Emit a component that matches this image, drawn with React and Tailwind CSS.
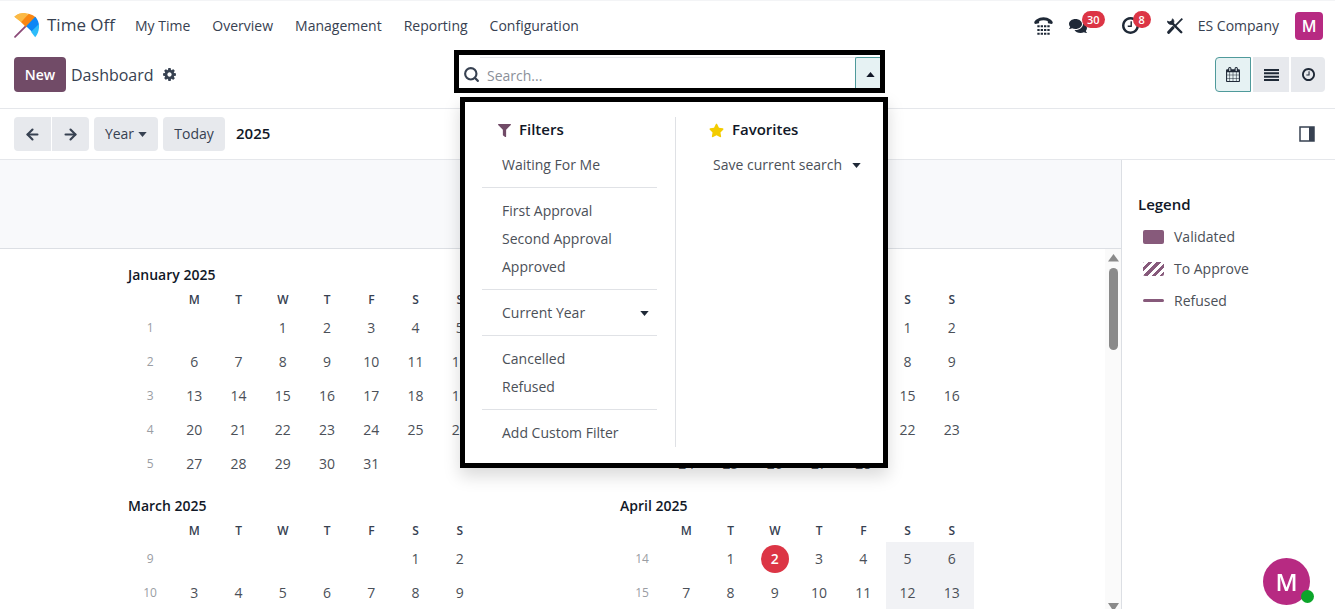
import { useState } from "react";
import { FaComments, FaFilter, FaStar } from "react-icons/fa";
import { ArrowLeft, ArrowRight, Search } from "lucide-react";

const menus = ["My Time", "Overview", "Management", "Reporting", "Configuration"];
const weekDays = ["M", "T", "W", "T", "F", "S", "S"];
const monthNames = [
  "January", "February", "March", "April", "May", "June",
  "July", "August", "September", "October", "November", "December",
];

const YEAR = 2025;
const TODAY = new Date(YEAR, 3, 2);

// ISO week number of the given monday
function weekNumber(monday) {
  const thursday = new Date(monday.getFullYear(), monday.getMonth(), monday.getDate() + 3);
  const start = new Date(thursday.getFullYear(), 0, 1);
  return Math.floor(Math.round((thursday - start) / 86400000) / 7) + 1;
}

function getWeeks(month) {
  const offset = (new Date(YEAR, month, 1).getDay() + 6) % 7;
  const total = new Date(YEAR, month + 1, 0).getDate();
  const weeks = [];
  for (let first = 1 - offset; first <= total; first += 7) {
    const days = weekDays.map((_, i) => {
      const day = first + i;
      return day >= 1 && day <= total ? day : null;
    });
    weeks.push({ number: weekNumber(new Date(YEAR, month, first)), days });
  }
  return weeks;
}

function Caret({ up = false }) {
  return (
    <svg viewBox="0 0 10 6" className="w-[9px] h-[5px] shrink-0" fill="currentColor" aria-hidden="true">
      <path d={up ? "M0 6 5 0l5 6z" : "M0 0h10L5 6z"} />
    </svg>
  );
}

function Logo() {
  return (
    <svg viewBox="0 0 72 72" className="w-[25px] h-[25px]" aria-hidden="true">
      <path d="M34 38 3 69" stroke="#8b4a78" strokeWidth="5" strokeLinecap="round" />
      <path d="M1 11C9 3 20 0 31 0L52 19 35 37Z" fill="#fbb945" />
      <path d="M20 26 42 2C51 4 58 8 64 14L35 41Z" fill="#f98612" />
      <path d="M1 11C9 3 20 0 31 0L42 2 20 26Z" fill="#fbb945" />
      <path d="M35 38 61 11C68 18 72 28 72 38L54 56Z" fill="#0d86f5" />
      <path d="M49 54 72 32C73 46 70 60 61 70Z" fill="#2ebcfa" />
    </svg>
  );
}

function CogIcon() {
  return (
    <svg viewBox="0 0 1792 1792" className="w-[15px] h-[15px]" fill="currentColor" aria-hidden="true">
      <path d="M1152 896q0-106-75-181t-181-75-181 75-75 181 75 181 181 75 181-75 75-181zm512-109v222q0 12-8 23t-20 13l-185 28q-19 54-39 91 35 50 107 138 10 12 10 25t-9 23q-27 37-99 108t-94 71q-12 0-26-9l-138-108q-44 23-91 38-16 136-29 186-7 28-36 28h-222q-14 0-24.5-8.5t-11.5-21.5l-28-184q-49-16-90-37l-141 107q-10 9-25 9-14 0-25-11-126-114-165-168-7-10-7-23 0-12 8-23 15-21 51-66.5t54-70.5q-27-50-41-99l-183-27q-13-2-21-12.500t-8-23.500v-222q0-12 8-23t19-13l186-28q14-46 39-92-40-57-107-138-10-12-10-24 0-10 9-23 26-36 98.500-107.500t94.500-71.500q13 0 26 10l138 107q44-23 91-38 16-136 29-186 7-28 36-28h222q14 0 24.500 8.500t11.500 21.500l28 184q49 16 90 37l142-107q9-9 24-9 13 0 25 10 129 119 165 170 7 8 7 22 0 12-8 23-15 21-51 66.500t-54 70.500q26 50 41 98l183 28q13 2 21 12.500t8 23.500z" />
    </svg>
  );
}

function CalendarIcon() {
  return (
    <svg viewBox="64 0 1664 1792" className="w-[14px] h-[15px]" fill="currentColor" aria-hidden="true">
      <path d="M192 1664h288v-288h-288v288zm352 0h320v-288h-320v288zm-352-352h288v-320h-288v320zm352 0h320v-320h-320v320zm-352-384h288v-288h-288v288zm736 736h320v-288h-320v288zm-384-736h320v-288h-320v288zm768 736h288v-288h-288v288zm-384-352h320v-320h-320v320zm-352-864v-288q0-13-9.500-22.500t-22.500-9.500h-64q-13 0-22.500 9.500t-9.500 22.500v288q0 13 9.500 22.500t22.500 9.500h64q13 0 22.500-9.500t9.500-22.500zm736 864h288v-320h-288v320zm-384-384h320v-288h-320v288zm384 0h288v-288h-288v288zm32-480v-288q0-13-9.500-22.500t-22.500-9.500h-64q-13 0-22.500 9.500t-9.500 22.500v288q0 13 9.500 22.500t22.500 9.500h64q13 0 22.500-9.500t9.500-22.500zm384-64v1280q0 52-38 90t-90 38h-1408q-52 0-90-38t-38-90v-1280q0-52 38-90t90-38h128v-96q0-66 47-113t113-47h64q66 0 113 47t47 113v96h384v-96q0-66 47-113t113-47h64q66 0 113 47t47 113v96h128q52 0 90 38t38 90z" />
    </svg>
  );
}

function ClockIcon({ className }) {
  return (
    <svg viewBox="128 128 1536 1536" className={className} fill="currentColor" aria-hidden="true">
      <path d="M1024 544v448q0 14-9 23t-23 9h-320q-14 0-23-9t-9-23v-64q0-14 9-23t23-9h224v-352q0-14 9-23t23-9h64q14 0 23 9t9 23zm416 352q0-148-73-273t-198-198-273-73-273 73-198 198-73 273 73 273 198 198 273 73 273-73 198-198 73-273zm224 0q0 209-103 385.500t-279.500 279.500-385.500 103-385.500-103-279.500-279.500-103-385.500 103-385.500 279.500-279.500 385.500-103 385.500 103 279.500 279.500 103 385.500z" />
    </svg>
  );
}

function PhoneIcon() {
  return (
    <svg viewBox="0 0 57 54" className="w-[19px] h-[18px]" fill="currentColor" aria-hidden="true">
      <path d="M1 19C-1 12 12 1 28.500 1S58 12 56 19l-3 2-11-2-1-7C33 9 24 9 16 12l-1 7-11 2z" />
      <path d="M10 28h37M10 39h37M10 50h37" stroke="currentColor" strokeWidth="6" strokeDasharray="7 3" />
    </svg>
  );
}

function ToolsIcon() {
  return (
    <svg viewBox="0 0 46 46" className="w-4 h-4" fill="none" stroke="currentColor" aria-hidden="true">
      <path d="M12 12 41 41" strokeWidth="7" strokeLinecap="round" />
      <path d="M1 9a11 11 0 0 0 15 9 10 10 0 0 0 0-16l-3 7-6 2z" fill="currentColor" strokeWidth="2" />
      <path d="M44 2 22 24" strokeWidth="5" />
      <path d="M17 28 5 41" strokeWidth="9" strokeLinecap="round" />
    </svg>
  );
}

function Navbar() {
  return (
    <header className="h-[50px] shrink-0 border-t border-gray-100 pl-3.5 pr-3 flex items-center justify-between">
      <div className="flex items-center">
        <a href="#" className="flex items-center gap-2 text-[17px] text-[#374151]">
          <Logo />
          Time Off
        </a>
        <nav className="ml-5 flex gap-[22px]">
          {menus.map((menu) => (
            <a key={menu} href="#">{menu}</a>
          ))}
        </nav>
      </div>

      <div className="flex items-center text-[#1f2937]">
        <button aria-label="Phone"><PhoneIcon /></button>
        <button aria-label="Messages" className="relative ml-4">
          <FaComments className="w-[18px] h-[18px]" />
          <span className="absolute -top-[6px] left-[13px] h-[17px] w-[23px] rounded-full bg-[#dc3545] text-white text-[11px] leading-[17px] font-semibold">30</span>
        </button>
        <button aria-label="Activities" className="relative ml-[35px]">
          <ClockIcon className="w-[17px] h-[17px]" />
          <span className="absolute -top-[6px] left-[11px] h-[17px] w-[18px] rounded-full bg-[#dc3545] text-white text-[11px] leading-[17px] font-semibold">8</span>
        </button>
        <button aria-label="Tools" className="ml-7"><ToolsIcon /></button>
        <button className="ml-[15px] text-[#374151]">ES Company</button>
        <button aria-label="Account" className="ml-4 h-7 w-7 rounded bg-[#b72a82] text-white text-base font-semibold">M</button>
      </div>
    </header>
  );
}

function MenuItem({ children, caret = false }) {
  return (
    <button className="w-full h-7 pl-5 pr-2 flex items-center justify-between text-left text-[#4b5058]">
      {children}
      {caret && <span className="text-[#1f2937]"><Caret /></span>}
    </button>
  );
}

function Divider() {
  return <hr className="mt-2 mb-[9px] border-[#e0e2e6]" />;
}

function SearchMenu() {
  return (
    <div className="absolute z-10 left-px top-[42px] w-[428px] border-5 border-black bg-white pt-[15px] pb-4 flex shadow-[0_8px_16px_rgba(0,0,0,0.15)]">
      <section className="w-[211px] pl-[17px] pr-[18px] border-r border-[#dfe1e5]">
        <h2 className="h-[26px] mb-2 pl-4 flex items-center gap-2 text-[15px] font-semibold text-[#111827]">
          <FaFilter className="w-[13px] h-[13px] text-[#714b67]" />
          Filters
        </h2>
        <MenuItem>Waiting For Me</MenuItem>
        <Divider />
        <MenuItem>First Approval</MenuItem>
        <MenuItem>Second Approval</MenuItem>
        <MenuItem>Approved</MenuItem>
        <Divider />
        <MenuItem caret>Current Year</MenuItem>
        <Divider />
        <MenuItem>Cancelled</MenuItem>
        <MenuItem>Refused</MenuItem>
        <Divider />
        <MenuItem>Add Custom Filter</MenuItem>
      </section>
      <section className="flex-1 pl-[17px] pr-[14px]">
        <h2 className="h-[26px] mb-2 pl-4 flex items-center gap-2 text-[15px] font-semibold text-[#111827]">
          <FaStar className="w-[15px] h-[15px] text-[#f3cc00]" />
          Favorites
        </h2>
        <MenuItem caret>Save current search</MenuItem>
      </section>
    </div>
  );
}

function ControlPanel() {
  const [open, setOpen] = useState(true);

  return (
    <div className="h-[59px] shrink-0 border-b border-gray-200 pl-3.5 pr-2.5 grid grid-cols-[1fr_431px_1fr] items-start">
      <div className="pt-[7px] flex items-center">
        <button className="h-[35px] w-[52px] rounded bg-[#714b67] text-white font-semibold">New</button>
        <span className="ml-[5px] text-base text-[#374151]">Dashboard</span>
        <button aria-label="Actions" className="ml-2 text-[#374151]"><CogIcon /></button>
      </div>

      <div className="relative h-[43px] border-5 border-black flex items-stretch">
        <label htmlFor="search" className="pt-[6px] pl-1 flex items-center">
          <Search size={17} strokeWidth={3} aria-label="Search" />
        </label>
        <input
          id="search"
          type="text"
          placeholder="Search..."
          className="flex-1 min-w-0 mt-[2px] pt-[5px] pl-[7px] border-t border-gray-200 outline-none placeholder:text-[#8b9099]"
        />
        <button
          aria-label="Toggle search panel"
          onClick={() => setOpen(!open)}
          className="w-[25px] mt-[2px] pt-[3px] pl-[5px] flex items-center justify-center border-l border-t border-[#4f9a9b] rounded-tl-xs bg-[#e6f2f3] text-[#111827]"
        >
          <Caret up />
        </button>
        {open && <SearchMenu />}
      </div>

      <div className="pt-[7px] flex justify-end gap-[2px] text-[#1f2937]">
        <button aria-label="Calendar" className="h-[35px] w-9 rounded-l border border-[#4f9a9b] bg-[#e6f2f3] flex items-center justify-center">
          <CalendarIcon />
        </button>
        <button aria-label="List" className="h-[35px] w-9 bg-[#e7e9ed] flex items-center justify-center">
          <svg viewBox="0 0 15 12" className="w-[15px] h-3" stroke="currentColor" strokeWidth="2" aria-hidden="true">
            <path d="M0 1h15M0 4.330h15M0 7.660h15M0 11h15" />
          </svg>
        </button>
        <button aria-label="Activity" className="h-[35px] w-[34px] rounded-r bg-[#e7e9ed] flex items-center justify-center">
          <ClockIcon className="w-[13px] h-[13px]" />
        </button>
      </div>
    </div>
  );
}

function Toolbar() {
  return (
    <div className="h-[51px] shrink-0 border-b border-gray-200 pl-3.5 pr-5 flex items-center justify-between">
      <div className="flex items-center gap-[5px] font-semibold text-[#374151]">
        <div className="flex gap-px">
          <button aria-label="Previous" className="h-[34px] w-[37px] rounded-l bg-[#e7e9ed] flex items-center justify-center">
            <ArrowLeft size={17} strokeWidth={3} />
          </button>
          <button aria-label="Next" className="h-[34px] w-[37px] rounded-r bg-[#e7e9ed] flex items-center justify-center">
            <ArrowRight size={17} strokeWidth={3} />
          </button>
        </div>
        <button className="h-[34px] w-16 rounded bg-[#e7e9ed] flex items-center justify-center gap-1 font-medium">
          Year <Caret />
        </button>
        <button className="h-[34px] w-[62px] rounded bg-[#e7e9ed] font-medium">Today</button>
        <span className="ml-[6px] text-[15px] text-[#111827]">{YEAR}</span>
      </div>
      <button aria-label="Toggle side panel" className="text-[#374151]">
        <svg viewBox="0 0 16 16" className="w-4 h-4" aria-hidden="true">
          <path d="M1 1h14v14H1z" fill="none" stroke="currentColor" strokeWidth="1.500" />
          <path d="M10 1h5v14h-5z" fill="currentColor" />
        </svg>
      </button>
    </div>
  );
}

function Month({ month }) {
  return (
    <section>
      <h3 className="h-[26px] flex items-center font-semibold text-[#111827]">
        {monthNames[month]} {YEAR}
      </h3>
      <table className="w-[354px] table-fixed text-center">
        <thead>
          <tr className="h-[23px] text-xs text-[#374151]">
            <th></th>
            {weekDays.map((day, idx) => (
              <th key={idx} className="p-0 font-semibold">{day}</th>
            ))}
          </tr>
        </thead>
        <tbody>
          {getWeeks(month).map((week) => (
            <tr key={week.number} className="h-[34px]">
              <td className="p-0 text-xs text-[#9a9da3]">{week.number}</td>
              {week.days.map((day, idx) => {
                const date = new Date(YEAR, month, day || 1);
                const today = day && date.getTime() === TODAY.getTime();
                const closed = day && idx > 4 && date > TODAY;
                return (
                  <td key={idx} className={closed ? "p-0 bg-[#f1f2f5]" : "p-0"}>
                    {today ? (
                      <span className="mx-auto h-7 w-7 rounded-full bg-[#dc3545] text-white font-semibold flex items-center justify-center">
                        {day}
                      </span>
                    ) : (
                      day
                    )}
                  </td>
                );
              })}
            </tr>
          ))}
        </tbody>
      </table>
    </section>
  );
}

function YearView() {
  const [count, setCount] = useState(4);

  // Load the next two months when the user gets near the bottom
  const handleScroll = (e) => {
    const { scrollTop, clientHeight, scrollHeight } = e.target;
    if (scrollTop + clientHeight > scrollHeight - 60) {
      setCount((c) => Math.min(c + 2, monthNames.length));
    }
  };

  return (
    <div className="flex-1 min-w-0 flex flex-col">
      <div className="h-[89px] shrink-0 border-b border-[#dcdfe4] bg-[#f8f9fb]"></div>
      <div className="flex-1 min-h-0 flex">
        <div
          onScroll={handleScroll}
          className="flex-1 overflow-y-auto [scrollbar-width:none] pt-[13px] pl-32 pr-[131px] grid grid-cols-[auto_auto] justify-between content-start gap-y-3 text-[#4b5058]"
        >
          {monthNames.slice(0, count).map((name, idx) => (
            <Month key={name} month={idx} />
          ))}
        </div>
        {/* Scrollbar */}
        <div className="w-4 pt-[5px] bg-[#fafafa] flex flex-col items-center text-[#8a8a8a]">
          <svg viewBox="0 0 11 8" className="w-[11px] h-2" fill="currentColor" aria-hidden="true">
            <path d="M5.500 0 11 7.500H0z" />
          </svg>
          <div className="mt-[6px] h-[82px] w-[9px] rounded-full bg-[#8a8a8a]"></div>
          <svg viewBox="0 0 11 8" className="mt-auto w-[11px] h-[6px]" fill="currentColor" preserveAspectRatio="none" aria-hidden="true">
            <path d="M0 0h11L7 8H4z" />
          </svg>
        </div>
      </div>
    </div>
  );
}

function Legend() {
  return (
    <aside className="w-[214px] shrink-0 border-l border-[#dcdfe4] pt-8 pl-4">
      <h2 className="h-6 text-[15px] leading-6 font-semibold text-[#111827]">Legend</h2>
      <ul className="mt-[6px] pl-[5px] flex flex-col gap-[3px] text-[#4b5058]">
        <li className="h-[29px] flex items-center gap-2.5">
          <span className="w-[21px] h-[14px] rounded-xs bg-[#875a7b]"></span>
          Validated
        </li>
        <li className="h-[29px] flex items-center gap-2.5">
          <span className="w-[21px] h-[14px] rounded-xs bg-[repeating-linear-gradient(-45deg,#875a7b_0_3px,#fff_3px_6px)]"></span>
          To Approve
        </li>
        <li className="h-[29px] flex items-center gap-2.5">
          <span className="w-[21px] h-[3px] rounded-xs bg-[#875a7b]"></span>
          Refused
        </li>
      </ul>
    </aside>
  );
}

function App() {
  return (
    <div className="h-screen flex flex-col overflow-hidden bg-white text-sm text-[#374151] font-['Open_Sans','Noto_Sans',sans-serif]">
      <Navbar />
      <ControlPanel />
      <Toolbar />
      <main className="flex-1 min-h-0 flex">
        <YearView />
        <Legend />
      </main>

      {/* Chat bubble */}
      <button
        aria-label="Open chat"
        className="fixed bottom-1 right-[25px] h-[47px] w-[47px] rounded-full bg-[#b72a82] text-white text-2xl font-semibold"
      >
        M
        <span className="absolute bottom-[2px] -right-1 h-[13px] w-[13px] rounded-full bg-[#0da52a]"></span>
      </button>
    </div>
  );
}

export default App;
